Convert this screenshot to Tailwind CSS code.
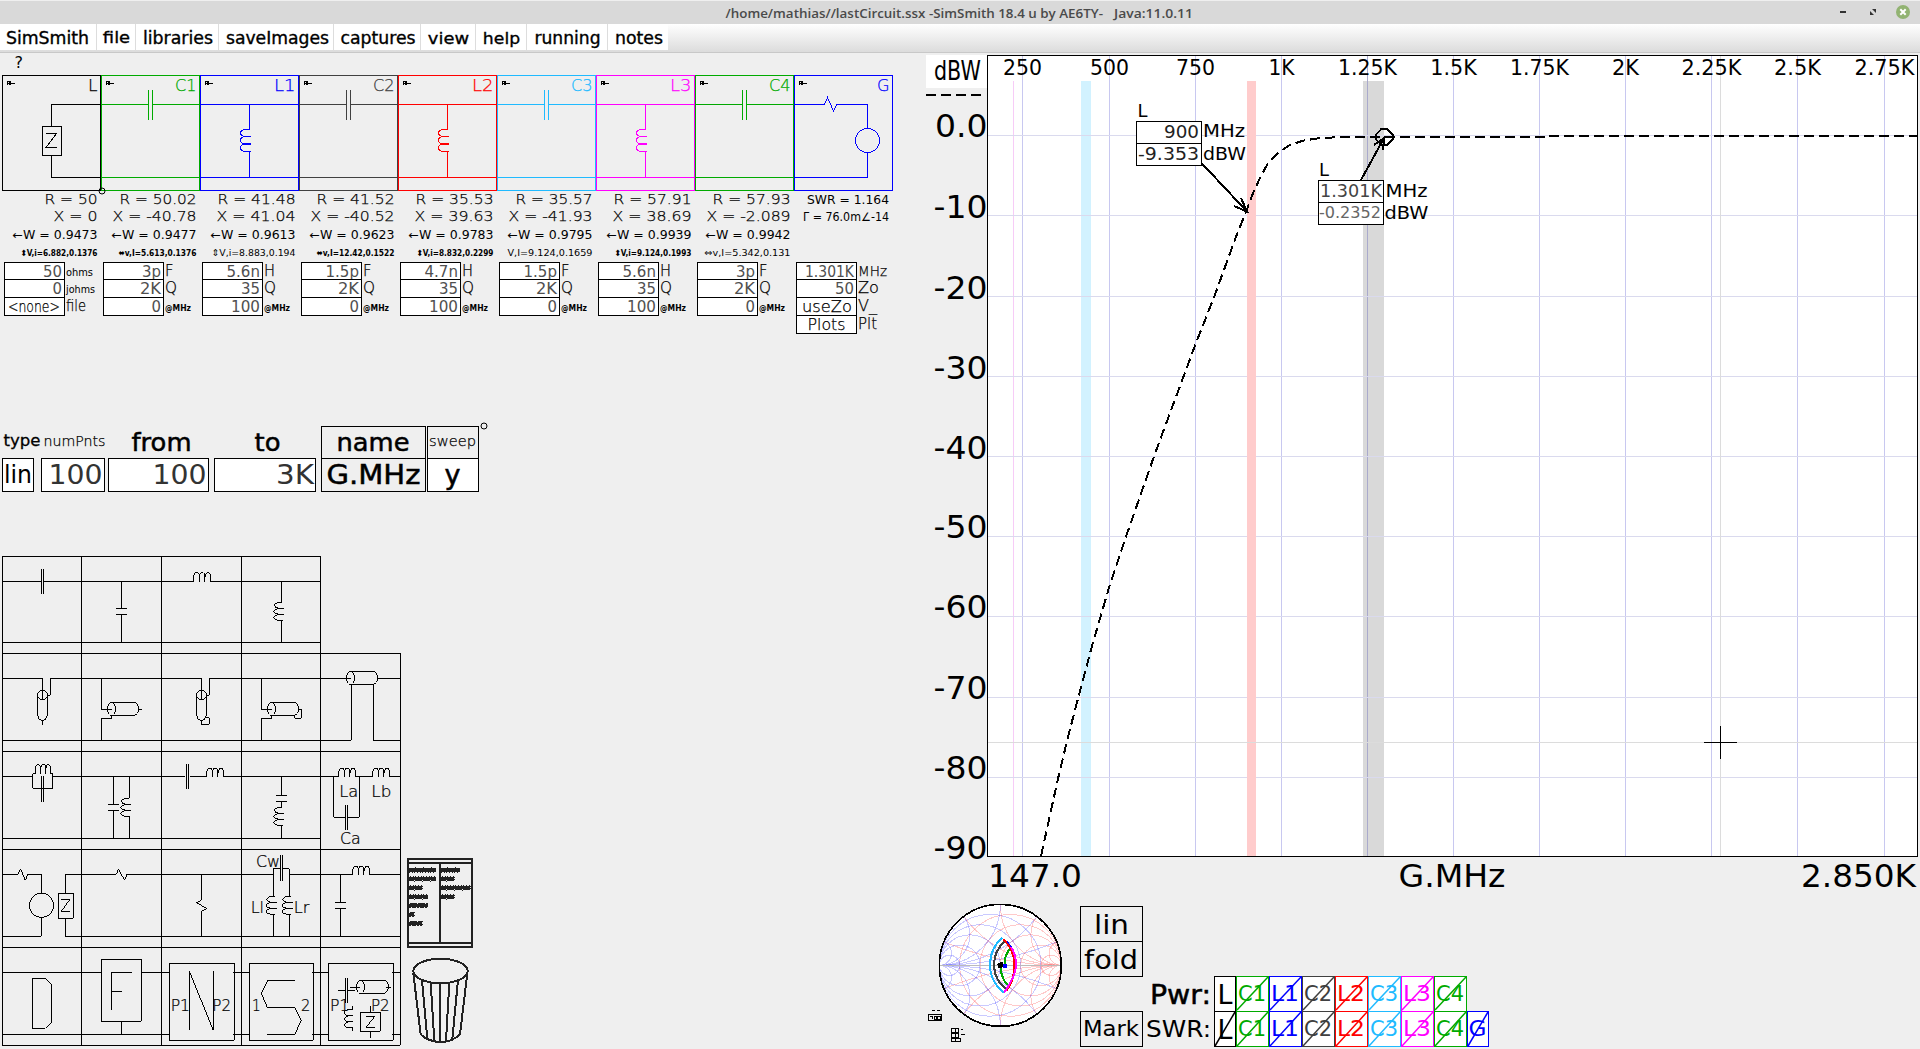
<!DOCTYPE html>
<html lang="en">
<head>
<meta charset="utf-8">
<title>SimSmith</title>
<script src="https://cdn.jsdelivr.net/npm/@tailwindcss/browser@4"></script>
</head>
<body class="w-[1920px] h-[1049px] overflow-hidden bg-[#efefef] text-black font-['DejaVu_Sans',sans-serif] flex flex-col">

<header class="h-6 shrink-0 bg-[#d9d9d9] border-t border-[#efefef] flex items-center relative">
  <svg class="w-full h-6 font-['Open_Sans','Noto_Sans',sans-serif] font-semibold" viewBox="0 1 1920 24" fill="#4a4a4a">
    <text x="725.5" y="18" font-size="13" textLength="377.5" lengthAdjust="spacingAndGlyphs">/home/mathias//lastCircuit.ssx -SimSmith 18.4 u by AE6TY-</text>
    <text x="1114" y="18" font-size="13" textLength="79" lengthAdjust="spacingAndGlyphs">Java:11.0.11</text>
    <rect x="1840" y="11" width="6" height="2" fill="#333"/>
    <path d="M1872 9h4v4zM1870 11v4h4z" fill="#333"/>
    <circle cx="1903" cy="12" r="7" fill="#92b372"/>
    <path d="M1900.3 9.3l5.4 5.4m0-5.4l-5.4 5.4" stroke="#fff" stroke-width="2" fill="none"/>
  </svg>
</header>
<nav id="menu" class="h-[29px] shrink-0 flex items-start bg-linear-to-b from-white to-[#dcdcdc] border-b border-[#c8c8c8]"></nav>

<main class="flex h-[996px]">
  <section class="w-[921px] flex flex-col relative">
    <svg class="h-[22px] w-10" viewBox="0 0 40 22"><text x="14.5" y="15" font-size="16" textLength="8.5" lengthAdjust="spacingAndGlyphs">?</text></svg>
    <div id="chain" class="flex pl-0.5 h-[351px]"></div>
    <div id="sweep" class="flex items-end pl-0.5 h-[66px]"></div>
    <svg class="grow w-[480px] [shape-rendering:crispEdges]" viewBox="0 492 480 557" fill="none" stroke="#000" id="palette"></svg>
    <svg class="absolute left-[98px] top-[134px] size-2" viewBox="0 0 8 8" fill="none" stroke="#000"><circle cx="4" cy="4" r="3"/></svg>
    <svg class="absolute left-[480px] top-[369px] size-2" viewBox="0 0 8 8" fill="none" stroke="#000"><circle cx="4" cy="4" r="3"/></svg>
  </section>
  <section class="w-[999px] flex flex-col">
    <svg id="plot" class="w-[999px] h-[842px] [shape-rendering:crispEdges]" viewBox="921 53 999 842"></svg>
    <div class="flex h-[154px] pl-[9px]">
      <svg id="smith" class="w-[150px] h-[154px] overflow-visible [shape-rendering:crispEdges]" viewBox="0 0 450 462" fill="none" stroke-width="3"></svg>
      <div class="pt-[11px] w-[63px] flex flex-col">
        <div class="border h-9"><svg class="size-full overflow-visible" viewBox="1081 907 61 34"><text x="1094" y="934" font-size="27" textLength="35" lengthAdjust="spacingAndGlyphs">lin</text></svg></div>
        <div class="border h-9 -mt-px"><svg class="size-full overflow-visible" viewBox="1081 942 61 34"><text x="1084" y="969" font-size="27" textLength="54" lengthAdjust="spacingAndGlyphs">fold</text></svg></div>
        <div class="border h-9 mt-[34px]"><svg class="size-full overflow-visible" viewBox="1081 1012 61 34"><text x="1083" y="1036" font-size="22" textLength="56" lengthAdjust="spacingAndGlyphs">Mark</text></svg></div>
      </div>
      <div class="pt-[81px] pl-[71px] flex flex-col relative">
        <svg class="absolute left-0 top-[81px] w-[71px] h-[72px]" viewBox="1143 976 71 72">
          <text x="1150" y="1004" font-size="26" textLength="61" lengthAdjust="spacingAndGlyphs" stroke="#000" stroke-width=".5">Pwr:</text>
          <text x="1146" y="1037" font-size="23" textLength="65" lengthAdjust="spacingAndGlyphs">SWR:</text>
        </svg>
        <div id="pwr" class="flex h-[35px]"></div>
        <div id="swr" class="flex h-9"></div>
      </div>
    </div>
  </section>
</main>

<script>
const $ = id => document.getElementById(id);
const T = (x, y, size, s, w, extra = '') =>
  `<text x="${x}" y="${y}" font-size="${size}" stroke="none" textLength="${w}" lengthAdjust="spacingAndGlyphs" ${extra}>${s}</text>`;
const TR = (x, y, size, s, w, extra = '') => T(x - w, y, size, s, w, extra);
const THIN = 'font-weight="200" style="stroke:currentColor;stroke-width:.25px"';

/* menu */
$('menu').innerHTML = [['SimSmith',97,6,84],['file',39,6,28],['libraries',83,7,71],['saveImages',115,7,104],['captures',87,6.5,76],['view',55,7,42],['help',51,7,38],['running',81,7.5,67],['notes',60,7,48]]
  .map(([s,w,x,tw], i) => `<div class="h-[26px] bg-white ${i < 8 ? 'border-r border-[#ddd]' : ''}" style="width:${w}px"><svg class="w-full h-[26px] overflow-visible" viewBox="0 0 ${w} 26" preserveAspectRatio="xMinYMin"><text x="${x}" y="20" font-size="17" textLength="${tw}" lengthAdjust="spacingAndGlyphs" stroke="#000" stroke-width=".35">${s}</text></svg></div>`).join('');

/* circuit chain */
const cap = 'M0 29.5H47.5M47.5 15V45M51.5 15V45M51.5 29.5H99M0 102.5H99';
const ind = 'M0 29.5H99M0 102.5H99M49.5 29.5V54.5H46C39 54.5 38.5 61.5 46 61.5H51M46 61.5C39 61.5 38.5 69 46 69H51M46 69C39 69 38.5 76.5 46 76.5H51M49.5 76.5V102.5M46 68.5H51';
const load = 'M99 29.5H49.5V51.5M40.5 51.5H59.5V80.5H40.5ZM49.5 80.5V102.5H99M44 58.5H54.5L44 72.5H54.5';
const gen = 'M0 29.5H30.5L33.5 22.5L39.5 36L43 29.5H73.5V53.5M61.5 65.5a12 12 0 1 0 24 0a12 12 0 1 0 -24 0M73.5 77.5V102.5H0';
const cells = [
  ['L','#000',load,[['R = 50',53],['X = 0',44],['←W = 0.9473',85],['⬍V,i=6.882,0.1376',77,8.5,1]],[['50','ohms'],['0','johms'],['&lt;none&gt;','file']]],
  ['C1','#00aa00',cap,[['R = 50.02',77],['X = -40.78',84],['←W = 0.9477',85],['⬌v,I=5.613,0.1376',78,8.5,1]],[['3p','F'],['2K','Q'],['0','@MHz']]],
  ['L1','#0000ff',ind,[['R = 41.48',78],['X = 41.04',79],['←W = 0.9613',85],['⇕V,i=8.883,0.194',84,9.5]],[['5.6n','H'],['35','Q'],['100','@MHz']]],
  ['C2','#404040',cap,[['R = 41.52',78],['X = -40.52',84],['←W = 0.9623',85],['⬌v,I=12.42,0.1522',78,8.5,1]],[['1.5p','F'],['2K','Q'],['0','@MHz']]],
  ['L2','#ff0000',ind,[['R = 35.53',78],['X = 39.63',79],['←W = 0.9783',85],['⬍V,i=8.832,0.2299',77,8.5,1]],[['4.7n','H'],['35','Q'],['100','@MHz']]],
  ['C3','#20baff',cap,[['R = 35.57',77],['X = -41.93',84],['←W = 0.9795',85],['V,I=9.124,0.1659',85,9.5]],[['1.5p','F'],['2K','Q'],['0','@MHz']]],
  ['L3','#ff00ff',ind,[['R = 57.91',78],['X = 38.69',79],['←W = 0.9939',85],['⬍V,i=9.124,0.1993',77,8.5,1]],[['5.6n','H'],['35','Q'],['100','@MHz']]],
  ['C4','#00aa00',cap,[['R = 57.93',78],['X = -2.089',84],['←W = 0.9942',85],['⇔v,I=5.342,0.131',86,9.5]],[['3p','F'],['2K','Q'],['0','@MHz']]],
  ['G','#0000ff',gen,[['SWR = 1.164',82,12],['Γ = 76.0m∠-14',86,11.5]],[['1.301K','MHz'],['50','Zo'],['useZo','V_'],['Plots','Plt']]],
];
const vw = {'50':19,'0':9.5,'&lt;none&gt;':52,'3p':19,'2K':21,'5.6n':33.5,'35':19,'100':29,'1.5p':33.5,'4.7n':33.5,'1.301K':49,'useZo':50,'Plots':38};
const lab = {ohms:[27,10.5],johms:[29,10.5],file:[20,15.5],F:[8.5,15],H:[11,15],Q:[12,15],'@MHz':[26,8.5],MHz:[29,14],Zo:[21,15],'V_':[19,15],Plt:[19,15]};
const sy = [204.3, 221.3, 239, 255.5], ss = [14.5, 14.5, 12];
$('chain').innerHTML = cells.map(([n,c,d,st,pr]) => {
  const G = n === 'G';
  return `<div class="w-[99px] shrink-0 flex flex-col">
    <div class="h-[116px] shrink-0 border" style="border-color:${c}"><svg class="w-[97px] h-[114px]" viewBox="1 1 97 114" fill="none" stroke="${c}">
      <path class="[shape-rendering:crispEdges]" d="${d}"/>
      <path stroke="#000" class="[shape-rendering:crispEdges]" d="M5.5 5.5V10M6 8.5H13M5.5 6.5H9M7 7.5H9M7 9.5H9"/>
      <g style="color:${c}">${TR(95.5,16,16,n,n.length > 1 ? 21.5 : (G ? 12.5 : 9.5),`fill="${c}" ${THIN}`)}</g></svg></div>
    <svg class="w-[99px] h-[71px] shrink-0 overflow-visible" viewBox="0 191 99 71">${st.map(([s,w,z,b],i) => TR(G ? 95 : 95.5, sy[i], z || ss[i], s, w, b ? 'font-weight="bold"' : i < 2 && !G ? THIN : '')).join('')}</svg>
    <div class="pl-0.5 flex flex-col">${pr.map(([v,l],i) => `<div class="flex ${i ? '-mt-px' : ''}">
      <div class="w-[61px] border bg-white ${i ? 'h-[19px]' : 'h-[18px]'}"><svg class="w-[59px] h-4 overflow-visible" viewBox="0 0 59 16">${TR(/none|use/.test(v) ? 55 : v === 'Plots' ? 48.5 : 57,13.5,15.5,v,vw[v],/none|use|Plots/.test(v) ? THIN : 'fill="#505050"')}</svg></div>
      <svg class="w-[36px] h-[17px] overflow-visible" viewBox="0 0 36 17">${T(1,13.7,lab[l][1],l,lab[l][0],l === '@MHz' ? 'font-weight="bold"' : lab[l][1] > 13 ? THIN : '')}</svg></div>`).join('')}</div>
  </div>`;
}).join('');

/* sweep table */
const col = (w, mr, head, val, framed, white) => `<div class="flex flex-col ${mr}" style="width:${w}px">
  <div class="h-8 ${framed ? 'border border-b-0' : 'border border-b-0 border-transparent'}"><svg class="h-[31px] overflow-visible" width="${w-2}" viewBox="1 427 ${w-2} 31">${head}</svg></div>
  <div class="h-[34px] border ${white ? 'bg-white' : ''}"><svg class="h-8 overflow-visible" width="${w-2}" viewBox="1 459 ${w-2} 32">${val}</svg></div></div>`;
const HV = 'style="stroke:#000;stroke-width:.5px"', DG = 'fill="#333"';
$('sweep').innerHTML =
  col(32,'mr-[7px]',T(1.5,446,16,'type',37,'style="stroke:#000;stroke-width:.3px"'),T(2,483,24,'lin',28),0,1) +
  col(64,'mr-[3px]',T(2.5,446,14,'numPnts',62,THIN),TR(61.5,484,27,'100',54,DG),0,1) +
  col(101,'mr-[5px]',T(23.5,450.5,25,'from',60,HV),TR(98.5,484,27,'100',54,DG),0,1) +
  col(102,'mr-[5px]',T(40.5,450.5,25,'to',26,HV),TR(100,484,27,'3K',38,DG),0,1) +
  col(105,'mr-px',T(15.5,450.5,25,'name',73,HV),T(5.5,484,27,'G.MHz',94,HV),1,0) +
  col(52,'',T(2,446,14.5,'sweep',47,THIN),T(17.5,484,27,'y',16,HV),1,1);

/* component palette: symbols are drawn on a 3x grid */
const hcoil = (x, y) => `M${x} ${y}v-14q1-14 9-14t8 14v14m0-14q1-14 9-14t8 14v14m1-14q1-14 8-14t7 14v14`;
const vcoil = (x, y) => `M${x} ${y}h-10q-14 3-14 9t14 9h16m-16 0q-16 3-16 9t16 9h16m-16 0q-16 3-16 9t14 9h14`;
const tube = (x, y, w, h) => `M${x} ${y}a12 ${h/2} 0 1 0 1 0ZM${x} ${y}H${x+w}a14 ${h/2} 0 0 1 0 ${h}H${x}`;
const g = (y, body) => `<g transform="translate(0 ${y}) scale(.33333)" stroke-width="3">${body}</g>`;
const P = d => `<path d="${d}"/>`;
const L = (x, y, s, w, z = 47) => T(x, y, z, s, w, 'fill="#000" font-weight="200" style="stroke:#000;stroke-width:.75px"');
$('palette').innerHTML =
 g(410, P('M7 730V439H962V730M244 439V730M484 439V730M724 439V730M7 697H962' +
   'M7 515H124M124 477V551M131 477V551M131 515H580M364 515V595M348 595H381M348 613H381M364 613V697' +
   hcoil(581,515) + 'M630 515H962M844 515V577' + vcoil(847,577) + 'M844 632V697')) +
 g(640, P('M7 40H1201V628H7ZM244 40V628M484 40V628M724 40V628M961 40V628M7 334H1201' +
   'M7 115H127V178M151 115V166H143M151 115H604V178M628 115V166H620M628 115H1052M1132 115H1201M7 301H1054V134M1120 134V301H1201' +
   'M113 165a14 14 0 1 0 29 0a14 14 0 1 0-29 0M113 165V225Q115 241 127 241T142 225V165M127 241V254' +
   'M590 165a14 14 0 1 0 29 0a14 14 0 1 0-29 0M590 165V225Q592 241 604 241T619 225V165M604 241V253H628V233H619' +
   'M304 115V208H335M304 301V235H335V226M784 115V208H815M784 301V235H815V226' +
   tube(334,187,68,39) + 'M414 208H425' + tube(814,187,68,39) + 'M893 208H904V235H884V226' + tube(1051,94,68,39) +
   'M7 409H98M158 409H555M98 445V401H106M152 401H158V445H98M124 409V486M131 409V486M106 401V385q1-12 8-12t8 12V401M122 385q1-12 8-12t8 12V401M138 385q1-12 7-12t7 12V401' +
   'M340 409V493M324 493H357M324 511H357M340 511V595M388 409V475' + vcoil(388,475) + 'M388 530V595' +
   'M559 372V446M565 372V446M571 409H620' + hcoil(620,412) + 'M668 409H1016M844 409V466M828 466H861M828 484H861M844 484V502' + vcoil(847,502) + 'M844 557V595M7 595H961' +
   hcoil(1016,412) + 'M1064 409H1118' + hcoil(1118,412) + 'M1166 409H1201M1001 409V532H1036M1042 532H1078V409M1036 495V569M1042 495V569') +
   L(1018,471,'La',57) + L(1114,471,'Lb',60) + L(1020,611,'Ca',62)) +
 g(840, P('M7 28H1201V616H7ZM244 28V616M484 28V616M724 28V616M961 28V616M7 322H1201' +
   'M7 103H54L62 86L76 121L83 103H124V160M88 196a36 36 0 1 0 73 0a36 36 0 1 0-73 0M124 233V289H7M175 160H220V235H175ZM196 160V103H349L355 87L374 121L381 103H820M196 235V289H1201M184 179H209L184 214H209' +
   'M604 103V181L589 188L620 205L604 215V289M820 289V224M820 169V86H841M841 45V122M847 45V122M847 86H868V169M868 103H1058M868 224V289' + vcoil(824,169) + vcoil(872,169) +
   'M1021 103V187M1006 187H1037M1006 205H1037M1021 205V289' + hcoil(1058,106) + 'M1106 103H1201' +
   'M7 397H304M304 358H424V544H304ZM424 397H508M364 544V583M7 583H508M97 415H136L154 433V547L136 565H97ZM334 397H396M334 397V510M334 454H366' +
   'M508 370H703V601H508ZM700 397H748M700 583H748M568 571V394L640 571V394M748 370H940V601H748ZM937 397H985M937 583H985' +
   'M884 421H803L784 460L802 502H884L904 542L884 583H802M985 370H1180V601H985ZM1177 397H1201M1177 583H1201' +
   'M1015 451H1036M1036 415V490M1042 415V490M1042 451H1066M1050 442H1081M1158 442H1172' + tube(1081,421,70,39) +
   'M1058 498V508H1045q-12 3-12 10t12 10h13m-13 0q-12 3-12 9t12 9h13m-13 0q-12 3-12 9t12 9h13V572M1111 499V517M1081 517H1141V574H1081ZM1111 574V594M1099 529H1124L1099 562H1124') +
   L(768,80,'Cw',72) + L(752,218,'Ll',40) + L(881,218,'Lr',47) + L(512,512,'P1',58) + L(637,512,'P2',56) + L(756,512,'1',26) + L(903,512,'2',28) + L(990,512,'P1',58) + L(1113,512,'P2',56) +
   `<g stroke="#222" stroke-width="6"><path d="M1224 56H1416V321H1224ZM1224 69H1416M1224 309H1416M1320 69V309"/>
    <path d="M1240 393a80 36 0 1 0 163 0a80 36 0 1 0-163 0M1240 400L1262 583Q1285 605 1320 606T1380 583L1402 400M1266 420L1282 598M1292 428L1303 603M1320 430V606M1348 428L1338 603M1374 420L1357 598"/></g>` +
   [[1228,88,10],[1228,114,10],[1228,141,5],[1228,168,7],[1228,194,7],[1228,221,2],[1228,248,5],[1324,88,7],[1324,114,5],[1324,141,11],[1324,168,5]]
     .map(([x,y,n]) => `<path stroke="#222" stroke-width="6" d="M${x} ${y+4}${'l5-8l-2 10l5-2'.repeat(n)}"/>`).join(''));

/* frequency plot */
const gx = [1022,1109,1195,1281,1367,1453,1539,1625,1711,1797,1884];
const gl = [['250',39],['500',39],['750',39],['1K',26],['1.25K',59],['1.5K',46.5],['1.75K',59],['2K',27],['2.25K',60],['2.5K',47],['2.75K',60]];
const gy = [135,215,296,376,456,536,616,697,777];
const yl = [['0.0',137],['-10',218],['-20',298.7],['-30',378.7],['-40',458.5],['-50',538.2],['-60',618.2],['-70',699.2],['-80',779.2],['-90',859]];
$('plot').innerHTML = `
 <rect x="926" y="55" width="61" height="33" fill="#fff"/><rect x="987" y="55" width="931" height="802" fill="#fff"/>
 <rect x="1013" y="81" width="1" height="775" fill="#f7ccf7"/><rect x="1081" y="81" width="10" height="775" fill="#d2f2ff"/>
 <rect x="1363" y="81" width="21" height="775" fill="#d9d9d9"/>
 ${gx.map(x => `<rect x="${x}" y="56" width="1" height="800" fill="${x === 1367 ? '#aaaacc' : '#c8c8f0'}"/>`).join('')}
 ${gy.map(y => `<rect x="988" y="${y}" width="929" height="1" fill="#dadaee"/>`).join('')}
 <rect x="1247" y="81" width="9" height="775" fill="#fcc"/><rect x="1720" y="55" width="1" height="802" fill="#dcdcdc"/><rect x="987" y="742" width="931" height="1" fill="#dcdcdc"/>
 <path d="M987.5 55.5H1917.5V856.5H987.5Z" fill="none" stroke="#000"/>
 <path d="M926 95H982" stroke="#000" stroke-width="2" stroke-dasharray="10 5"/>
 <path d="M1041 856L1057.7 780L1067.7 738L1080 691L1091.7 647L1108.3 590L1126.7 534.6L1155 453.5L1184.3 374.4L1195.3 344.8L1214.7 295.4L1235 239.5L1246.7 210L1253 193L1260 178L1268 163L1278 152.7L1290 145L1303 140.7L1320 138L1345 137H1548V136H1917" fill="none" stroke="#000" stroke-width="2" stroke-dasharray="10 5"/>
 <path d="M1704 742.5H1737M1720.5 726V759" stroke="#000"/>
 <g stroke="#000" stroke-width="2" fill="none"><path d="M1201.5 163L1247 211.5M1234 206L1247 211.5L1241 198"/><path d="M1361 180L1384 138M1374 145L1384 138L1383 150"/>
 <path stroke-width="1.5" d="M1381 129H1387L1393 135V139L1387 145H1381L1376 139V135Z"/></g>
 <g fill="#fff" stroke="#000"><path d="M1136.5 121.5H1201.5V165.5H1136.5ZM1136.5 143.5H1201.5"/><path d="M1318.5 180.5H1383.5V224.5H1318.5ZM1318.5 202.5H1383.5"/></g>
 ${gx.map((x,i) => T(x + .5 - gl[i][1]/2, 75.3, 20.5, gl[i][0], gl[i][1])).join('')}
 ${T(934,80,26,'dBW',47)}
 ${yl.map(([s,y],i) => TR(987.5,y,32,s,i ? 54 : 52.5)).join('')}
 ${T(988,886.7,32,'147.0',94)}${T(1398.5,886.7,32,'G.MHz',107)}${T(1801,887,32,'2.850K',115)}
 ${T(1137.5,116.7,17,'L',10)}${TR(1199,138.3,18,'900',35,'fill="#222"')}${TR(1199,160.3,18,'-9.353',61,'fill="#222"')}
 ${T(1203,137.3,18,'MHz',42)}${T(1203,160,18,'dBW',43)}
 ${T(1319,175.7,17,'L',10)}${T(1320,196.7,17.5,'1.301K',62,'fill="#444"')}${T(1319,218.3,16,'-0.2352',62,'fill="#666"')}
 ${T(1385.5,196.7,18,'MHz',42)}${T(1384.5,219,18,'dBW',44)}`;

/* miniature Smith chart */
const cx = 211, cy = 211, R = 183;
const grid = (s, color) => [.2,.5,1,2,5].map(r => {
  const rr = R / (1 + r);
  return `<circle cx="${cx + s*(R - rr)}" cy="${cy}" r="${rr}" stroke="${color}"/>` +
    `<circle cx="${cx + s*R}" cy="${cy - R/r}" r="${R/r}" stroke="${color}"/><circle cx="${cx + s*R}" cy="${cy + R/r}" r="${R/r}" stroke="${color}"/>`;
}).join('');
$('smith').innerHTML = `<clipPath id="disc"><circle cx="${cx}" cy="${cy}" r="${R}"/></clipPath>
 <circle cx="${cx}" cy="${cy}" r="${R}" fill="#fff"/>
 <g clip-path="url(#disc)">${grid(1,'rgba(255,80,80,.3)')}${grid(-1,'rgba(80,80,255,.3)')}<path d="M28 211H394" stroke="#bbb"/></g>
 <circle cx="${cx}" cy="${cy}" r="${R}" stroke="#000" stroke-width="5"/>
 <g stroke-width="6"><path stroke="#20baff" d="M217 128Q180 160 180 210T222 293"/><path stroke="#404040" d="M226 138Q192 165 192 210T232 285"/>
 <path stroke="#00f" d="M228 138L243 156"/><path stroke="#0a0" d="M243 158Q222 180 224 208M211 215Q215 255 235 272"/>
 <path stroke="#f00" d="M220 133Q254 165 253 212T230 285"/><path stroke="#f0f" d="M243 156Q259 180 258 212T222 293"/></g>
 <rect x="219" y="207" width="12" height="12" fill="#00f"/><path fill="#000" d="M202 207L210 202H219V214L214 220H206Z"/>
 <path stroke="#000" d="M-5 358H35V376H-5ZM6 346H15M20 346H30M0 364H8V371M12 372V364H19V372ZM23 364H30V372H23ZM64 400H86V412H64ZM64 416H86V427H64ZM64 430H91V439H64ZM75 400V439M93 404H99M93 417H105"/>`;

/* power / SWR selectors */
const sel = (n, c, row) => {
  const w = n.length > 1 ? 33 : 22, h = row ? 36 : 35, big = n === 'L';
  return `<div class="border bg-white" style="border-color:${c};width:${w}px;height:${h + (row ? 0 : 1)}px"><svg class="overflow-visible" width="${w-2}" height="${h-2}" viewBox="1 1 ${w-2} ${h-2}">
   ${T(big ? 3.5 : n === 'G' ? 1.5 : 2, big ? (row ? 27.5 : 28) : 25.3, big ? 26 : 22, n, big ? 15 : n === 'G' ? 18 : 28, `fill="${c}"`)}
   ${big && !row ? '' : `<path d="M1 ${h-1}L${w-1} 1" stroke="${c}" stroke-width="1.5"/>`}</svg></div>`;
};
$('pwr').innerHTML = cells.slice(0,8).map(([n,c]) => sel(n,c,0)).join('');
$('swr').innerHTML = cells.map(([n,c]) => sel(n,c,1)).join('');
</script>
</body>
</html>
